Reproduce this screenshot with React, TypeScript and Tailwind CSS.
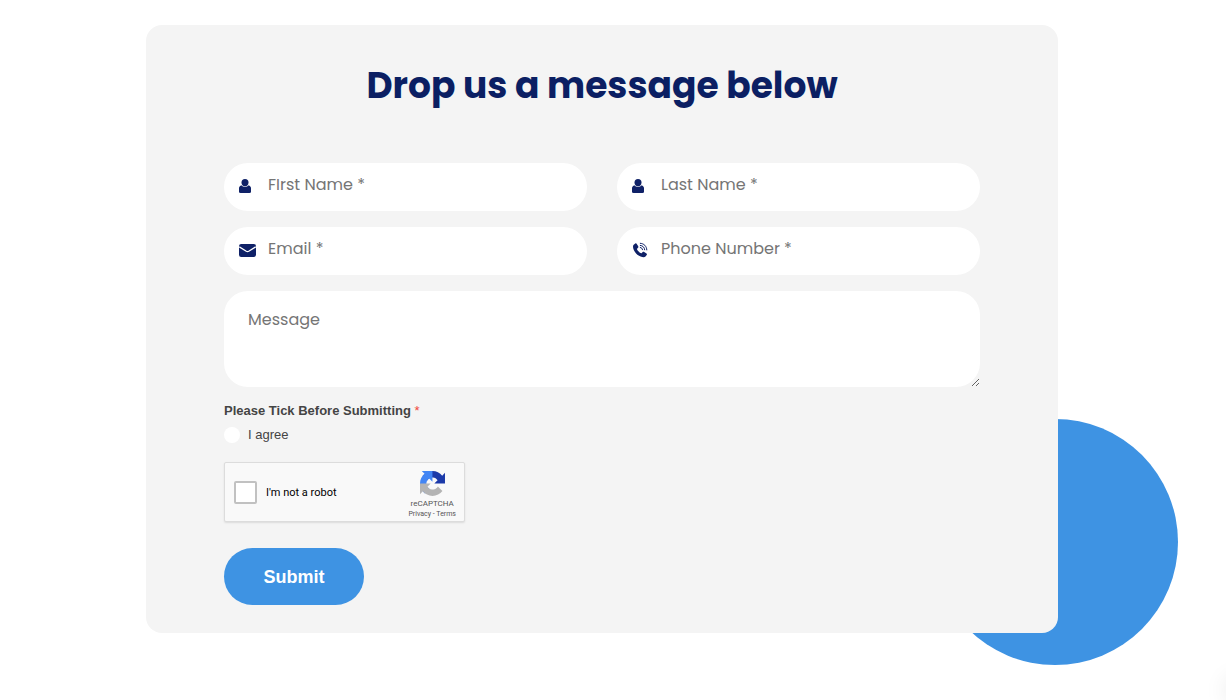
import type { ReactNode } from 'react';

const fieldText =
  'font-[Poppins,Inter,sans-serif] text-base text-gray-700 placeholder:text-[#757575] outline-none focus:ring-2 focus:ring-[#3e93e3]';

function UserIcon({ label }: { label: string }) {
  return (
    <svg viewBox="0 0 12 14" className="h-3.5 w-3" fill="currentColor" role="img" aria-label={label}>
      <ellipse cx="6" cy="3.6" rx="3.5" ry="3.6" />
      <path d="M2.3 6.200C4.300 8.300 7.700 8.300 9.700 6.200 11.500 7 12.300 8.600 12.300 10.800v1.400c0 1.200-.6 1.800-1.800 1.800H1.500C.3 14-.3 13.400-.3 12.200V10.800c0-2.200.8-3.800 2.600-4.600z" />
    </svg>
  );
}

function MailIcon({ label }: { label: string }) {
  return (
    <svg viewBox="0 0 17 13" className="h-[13px] w-[17px]" role="img" aria-label={label}>
      <rect width="17" height="13" rx="2.2" fill="currentColor" />
      <path d="M.3 2.800 7.300 7.300Q8.500 8 9.700 7.300L16.700 2.800" fill="none" stroke="#fff" strokeWidth="1.300" />
    </svg>
  );
}

function PhoneIcon({ label }: { label: string }) {
  return (
    <svg viewBox="0 0 16 16" className="size-4" role="img" aria-label={label}>
      <path
        fill="currentColor"
        d="M3.300 1.600 1.700 2.800C.7 3.700.8 5.600 1.800 7.900c1.300 2.900 3.900 5.500 6.800 6.700 2.200.9 4 .9 4.900 0l1.200-1.500c.4-.5.3-1.100-.2-1.500l-2.300-1.700c-.5-.4-1.100-.3-1.500.1l-.9.900c-.4.300-.8.300-1.200.1C7.300 10.300 6 9 5.200 7.700c-.3-.5-.2-.9.100-1.200l.7-.8c.4-.4.5-.9.200-1.400L4.800 1.900c-.4-.6-1-.7-1.500-.3z"
      />
      <g fill="none" stroke="currentColor" strokeLinecap="round" strokeWidth="1">
        <path d="M8.300 1.300c3.600.1 6.400 2.900 6.500 6.600" />
        <path d="M8.300 3.400c2.500.2 4.200 1.900 4.400 4.400" />
        <path d="M8.300 5.500c1.300.2 2 .9 2.200 2.200" />
      </g>
    </svg>
  );
}

function Field({ id, label, type, icon }: { id: string; label: string; type: string; icon: ReactNode }) {
  return (
    <div className="relative">
      <label htmlFor={id} className="absolute top-0 bottom-0.5 left-[15px] flex items-center text-[#0f2167]">
        {icon}
      </label>
      <input
        id={id}
        name={id}
        type={type}
        placeholder={`${label} *`}
        className={`h-12 w-full rounded-full bg-white pr-6 pb-1.5 pl-11 ${fieldText}`}
      />
    </div>
  );
}

function Captcha() {
  return (
    <div className="mt-[19px] flex h-[60px] w-[241px] items-center rounded-xs border border-[#dcdcdc] bg-[#f9f9f9] pr-2 pl-[9px] shadow-[0_1px_2px_rgba(0,0,0,0.1)]">
      <input
        id="robot"
        type="checkbox"
        className="size-[23px] appearance-none rounded-xs border-2 border-[#c1c1c1] bg-white checked:bg-[#3e93e3]"
      />
      <label htmlFor="robot" className="ml-[9px] pt-0.5 font-[Roboto,sans-serif] text-[11px] text-black">
        I'm not a robot
      </label>
      <div className="ml-auto flex flex-col items-center pt-1 font-[Roboto,sans-serif] text-[#555]">
        <svg viewBox="0 0 64 64" className="size-[25px]" aria-hidden="true">
          <path
            fill="#1c3aa9"
            d="M64 31.955l-.033-1.37V4.687l-7.16 7.16C50.948 4.674 42.033.093 32.05.093c-10.4 0-19.622 4.96-25.458 12.64l11.736 11.86a15.55 15.55 0 0 1 4.754-5.334c2.05-1.6 4.952-2.906 8.968-2.906.485 0 .86.057 1.135.163 4.976.393 9.288 3.14 11.828 7.124l-8.307 8.307L64 31.953"
          />
          <path
            fill="#4285f4"
            d="M31.862.094l-1.37.033H4.594l7.16 7.16C4.58 13.147 0 22.06 0 32.046c0 10.4 4.96 19.622 12.64 25.458L24.5 45.768a15.55 15.55 0 0 1-5.334-4.754c-1.6-2.05-2.906-4.952-2.906-8.968 0-.485.057-.86.163-1.135.393-4.976 3.14-9.288 7.124-11.828l8.307 8.307L31.86.095"
          />
          <path
            fill="#b4b4b4"
            d="M.001 32.045l.033 1.37v25.898l7.16-7.16c5.86 7.173 14.774 11.754 24.76 11.754 10.4 0 19.622-4.96 25.458-12.64l-11.736-11.86a15.55 15.55 0 0 1-4.754 5.334c-2.05 1.6-4.952 2.906-8.968 2.906-.485 0-.86-.057-1.135-.163-4.976-.393-9.288-3.14-11.828-7.124l8.307-8.307c-10.522.04-22.4.066-27.295-.005"
          />
        </svg>
        <span className="mt-0.5 text-[8px] leading-[12px]">reCAPTCHA</span>
        <span className="text-[7px] leading-[8px]">
          <a href="#privacy">Privacy</a> - <a href="#terms">Terms</a>
        </span>
      </div>
    </div>
  );
}

export default function App() {
  return (
    <main className="min-h-screen overflow-hidden bg-white pt-[25px] pr-[168px] pb-[67px] pl-[146px] font-['Liberation_Sans',Arial,sans-serif]">
      <section className="relative">
        <div className="absolute -right-[120px] -bottom-8 size-[246px] rounded-full bg-[#3e93e3]" />
        <div className="relative rounded-2xl bg-[#f4f4f4] px-[78px] pt-9 pb-7">
          <h1 className="text-center font-[Poppins,Inter,sans-serif] text-4xl leading-[50px] font-bold text-[#0b1f63]">
            Drop us a message below
          </h1>
          <form className="mt-[52px]" onSubmit={(e) => e.preventDefault()}>
            <div className="grid grid-cols-2 gap-x-[30px] gap-y-4">
              <Field id="first-name" label="FIrst Name" type="text" icon={<UserIcon label="First name" />} />
              <Field id="last-name" label="Last Name" type="text" icon={<UserIcon label="Last name" />} />
              <Field id="email" label="Email" type="email" icon={<MailIcon label="Email" />} />
              <Field id="phone" label="Phone Number" type="tel" icon={<PhoneIcon label="Phone number" />} />
              <textarea
                id="message"
                name="message"
                aria-label="Message"
                placeholder="Message"
                className={`col-span-2 block h-24 w-full resize rounded-3xl bg-white px-6 py-4 leading-[26px] ${fieldText}`}
              />
            </div>
            <fieldset className="mt-4">
              <legend className="text-[13px] leading-4 font-bold text-[#444]">
                Please Tick Before Submitting <span className="font-normal text-[#f0443a]">*</span>
              </legend>
              <div className="mt-2 flex h-4 items-center gap-2">
                <input
                  id="agree"
                  type="checkbox"
                  className="size-4 appearance-none rounded-full bg-white checked:bg-[#3e93e3]"
                />
                <label htmlFor="agree" className="text-[13px] leading-4 text-[#444]">
                  I agree
                </label>
              </div>
            </fieldset>
            <Captcha />
            <button
              type="submit"
              className="mt-[26px] block h-[57px] w-[140px] rounded-full bg-[#3e93e3] text-lg font-bold text-white"
            >
              Submit
            </button>
          </form>
        </div>
      </section>
      <div className="fixed -right-10 bottom-0 h-5 w-10 rounded-full shadow-[0_0_24px_rgba(0,0,0,0.12)]" />
    </main>
  );
}
